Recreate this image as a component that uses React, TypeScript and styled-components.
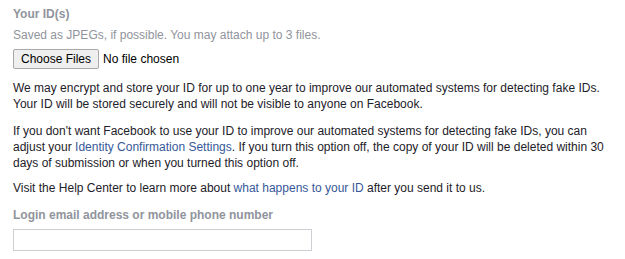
import styled, { createGlobalStyle } from 'styled-components'

const GlobalStyle = createGlobalStyle`
  body {
    margin: 0;
    background: #fff;
    font-family: Arial, "Liberation Sans", Helvetica, sans-serif;
    font-size: 12px;
    color: #1d2129;
  }
`

const Form = styled.div`
  padding: 6px 13px 0 13px;
  width: 600px;
`

const FieldLabel = styled.div`
  font-weight: bold;
  color: #90949c;
  font-size: 12px;
  line-height: 16px;
`

const Hint = styled.div`
  color: #90949c;
  line-height: 16px;
  margin-top: 5px;
`

const FileRow = styled.div`
  display: flex;
  align-items: center;
  margin-top: 6px;
  gap: 4px;
`

const FileButton = styled.button`
  font-family: Arial, "Liberation Sans", sans-serif;
  font-size: 12px;
  color: #000;
  height: 20px;
  padding: 0 7px;
  background: #efefef;
  border: 1px solid #a9a9a9;
  border-radius: 2px;
`

const FileStatus = styled.span`
  color: #000;
`

const Paragraph = styled.p<{ $gap?: number }>`
  margin: ${p => p.$gap ?? 10}px 0 0 0;
  line-height: 16px;
  color: #1d2129;
`

const Link = styled.a`
  color: #365899;
  text-decoration: none;
  cursor: pointer;
`

const InputLabel = styled(FieldLabel)`
  margin-top: 11px;
`

const TextInput = styled.input`
  display: block;
  margin-top: 6px;
  width: 299px;
  height: 22px;
  box-sizing: border-box;
  border: 1px solid #ccd0d5;
  padding: 0 4px;
  font-family: Arial, "Liberation Sans", sans-serif;
  font-size: 12px;
`

export default function App() {
  return (
    <>
      <GlobalStyle />
      <Form>
        <FieldLabel>Your ID(s)</FieldLabel>
        <Hint>Saved as JPEGs, if possible. You may attach up to 3 files.</Hint>
        <FileRow>
          <FileButton>Choose Files</FileButton>
          <FileStatus>No file chosen</FileStatus>
        </FileRow>
        <Paragraph $gap={11}>
          We may encrypt and store your ID for up to one year to improve our automated systems for detecting fake IDs.
          <br />
          Your ID will be stored securely and will not be visible to anyone on Facebook.
        </Paragraph>
        <Paragraph $gap={11}>
          If you don't want Facebook to use your ID to improve our automated systems for detecting fake IDs, you can
          adjust your <Link>Identity Confirmation Settings</Link>. If you turn this option off, the copy of your ID will be deleted within 30
          days of submission or when you turned this option off.
        </Paragraph>
        <Paragraph $gap={9}>
          Visit the Help Center to learn more about <Link>what happens to your ID</Link> after you send it to us.
        </Paragraph>
        <InputLabel>Login email address or mobile phone number</InputLabel>
        <TextInput type="text" />
      </Form>
    </>
  )
}
